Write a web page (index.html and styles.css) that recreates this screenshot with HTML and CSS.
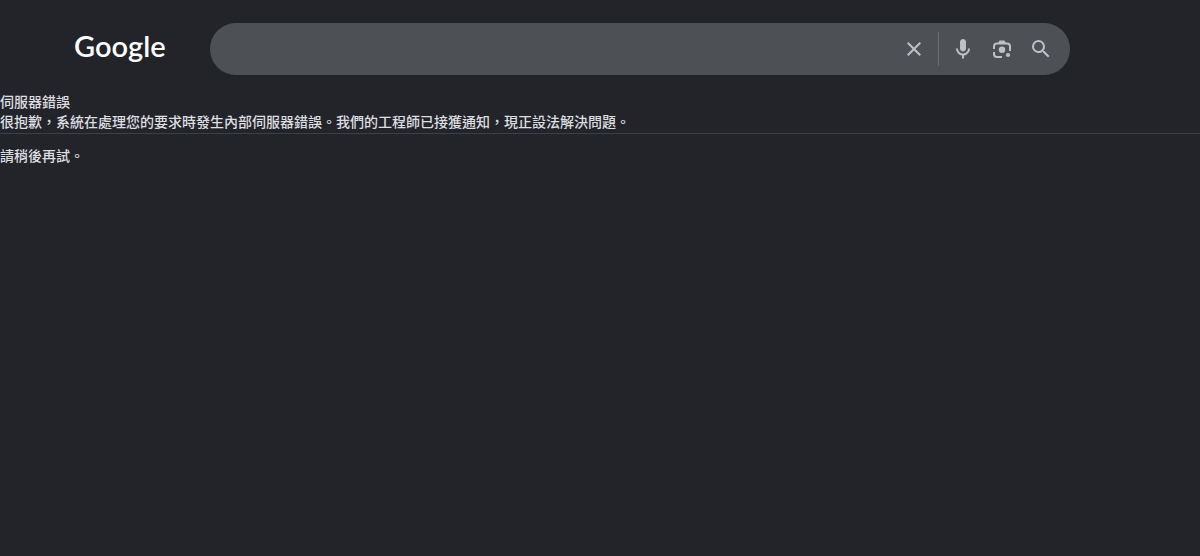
FILE: index.html
```html
<!DOCTYPE html>
<html lang="zh-Hant">
<head>
    <meta charset="UTF-8">
    <meta name="viewport" content="width=device-width, initial-scale=1.0">
    <title>伺服器錯誤</title>
    <link rel="stylesheet" href="styles.css">
</head>
<body>
    <header class="header">
        <a class="logo" href="/">Google</a>

        <!-- Search box -->
        <form class="search-box" action="/search" role="search">
            <input class="search-input" type="text" name="q" aria-label="搜尋" autocomplete="off">
            <button class="icon-btn" type="reset" aria-label="清除">
                <svg viewBox="0 0 24 24"><path d="M19 6.41L17.59 5 12 10.59 6.41 5 5 6.41 10.59 12 5 17.59 6.41 19 12 13.41 17.59 19 19 17.59 13.41 12z"/></svg>
            </button>
            <span class="divider"></span>
            <div class="tools">
                <button class="icon-btn" type="button" aria-label="語音搜尋">
                    <svg viewBox="0 0 24 24"><path d="M12 14.500c1.660 0 3-1.340 3-3V5c0-1.660-1.340-3-3-3S9 3.340 9 5v6.500c0 1.660 1.340 3 3 3z"/><path d="M17 11.500c0 2.760-2.240 5-5 5s-5-2.240-5-5H5c0 3.530 2.610 6.430 6 6.920v3.080h2v-3.080c3.390-.49 6-3.390 6-6.920z"/></svg>
                </button>
                <button class="icon-btn" type="button" aria-label="以圖搜尋">
                    <svg viewBox="0 0 24 24">
                        <path class="line" d="M4 12V9.500a3 3 0 0 1 3-3h10a3 3 0 0 1 3 3V14M4 15v2a3 3 0 0 0 3 3h5"/>
                        <path d="M8 6.500L9.500 3.500h5l1.500 3z"/>
                        <circle cx="12" cy="12.700" r="3.200"/>
                        <circle cx="18" cy="18" r="2.100"/>
                    </svg>
                </button>
                <button class="icon-btn" type="submit" aria-label="搜尋">
                    <svg viewBox="0 0 24 24"><path d="M15.500 14h-.79l-.28-.27A6.471 6.471 0 0 0 16 9.500 6.500 6.500 0 1 0 9.500 16c1.610 0 3.090-.59 4.230-1.570l.27.28v.79l5 4.990L20.490 19l-4.990-5zm-6 0C7.010 14 5 11.990 5 9.500S7.010 5 9.500 5 14 7.010 14 9.500 11.990 14 9.500 14z"/></svg>
                </button>
            </div>
        </form>
    </header>

    <!-- Error message -->
    <main class="error">
        <h1>伺服器錯誤</h1>
        <p>很抱歉，系統在處理您的要求時發生內部伺服器錯誤。我們的工程師已接獲通知，現正設法解決問題。</p>
        <hr>
        <p>請稍後再試。</p>
    </main>
</body>
</html>
```
FILE: styles.css
```css
body {
    font-family: "Liberation Sans", "Noto Sans CJK TC", sans-serif;
    background-color: #232429;
    color: #dddee0;
    margin: 0;
}
.header {
    display: flex;
    align-items: center;
    gap: 46px;
    padding: 23px 130px 17px 74px;
}
.logo {
    width: 90px;
    padding-bottom: 6px;
    font-family: Lato, sans-serif;
    font-size: 29px;
    font-weight: 600;
    line-height: 40px;
    color: #fff;
    text-decoration: none;
}
.search-box {
    display: flex;
    align-items: center;
    flex: 1;
    gap: 12px;
    height: 52px;
    padding: 0 17px 0 24px;
    box-sizing: border-box;
    border-radius: 26px;
    background-color: #4d5156;
}
.search-input {
    flex: 1;
    min-width: 0;
    padding: 0;
    border: 0;
    outline: 0;
    background: transparent;
    color: #e8eaed;
    font-size: 16px;
}
.icon-btn {
    padding: 0;
    border: 0;
    background: transparent;
    cursor: pointer;
}
.icon-btn svg {
    display: block;
    width: 24px;
    height: 24px;
    fill: #bdc1c6;
}
.icon-btn .line {
    fill: none;
    stroke: #bdc1c6;
    stroke-width: 2;
}
.divider {
    width: 1px;
    height: 34px;
    background-color: #6b6f74;
}
.tools {
    display: flex;
    gap: 15px;
}
.error {
    font-size: 14px;
    font-weight: 500;
    line-height: 20px;
}
.error h1 {
    margin: 0;
    font-size: 14px;
    font-weight: 500;
}
.error p {
    margin: 0;
}
.error hr {
    height: 1px;
    margin: 1px 0 12px;
    border: 0;
    background-color: #3c4043;
}
```
